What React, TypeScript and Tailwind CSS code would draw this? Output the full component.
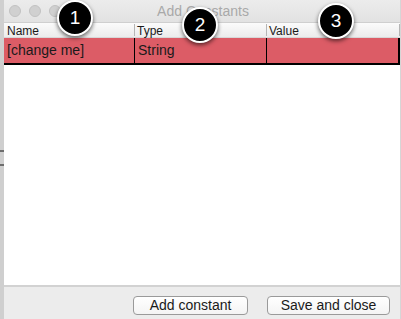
import React from "react";

const font = { fontFamily: '"Liberation Sans", Arial, sans-serif' };

function Badge({ n, className }: { n: number; className: string }) {
  return (
    <div
      className={`absolute w-[36px] h-[36px] rounded-full bg-black border-[2px] border-white shadow-[0_2px_4px_rgba(0,0,0,0.6)] flex items-center justify-center text-white text-[19px] ${className}`}
    >
      {n}
    </div>
  );
}

export default function App() {
  return (
    <div className="relative w-[401px] h-[319px] flex bg-white overflow-hidden" style={font}>
      <div className="w-[4px] h-full bg-[#cfcfcf] flex flex-col">
        <div className="h-[150px]" />
        <div className="h-[2px] bg-[#6e6e6e]" />
        <div className="h-[12px]" />
        <div className="h-[2px] bg-[#6e6e6e]" />
      </div>
      <div className="flex-1 flex flex-col border-r border-[#d6d6d6]">
        <div className="h-[22px] bg-gradient-to-b from-[#ececec] to-[#e2e2e2] relative flex items-center justify-center">
          <div className="absolute left-[5px] top-[5px] flex gap-[8px]">
            <div className="w-[12px] h-[12px] rounded-full bg-[#d0d0d0] border border-[#c2c2c2]" />
            <div className="w-[12px] h-[12px] rounded-full bg-[#d0d0d0] border border-[#c2c2c2]" />
            <div className="w-[12px] h-[12px] rounded-full bg-[#d0d0d0] border border-[#c2c2c2]" />
          </div>
          <span className="text-[14px] text-[#a9a9a9] ml-[2px]">Add Constants</span>
        </div>
        <div className="h-[16px] flex bg-gradient-to-b from-[#fbfbfb] to-[#ececec] border-t border-[#cfcfcf] border-b border-b-[#d8d8d8] text-[12px] text-[#1a1a1a] leading-[14px]">
          <div className="w-[131px] pl-[3px] border-r border-[#b5b5b5] my-[1px]">Name</div>
          <div className="w-[132px] pl-[2px] border-r border-[#b5b5b5] my-[1px]">Type</div>
          <div className="flex-1 pl-[2px] border-r border-[#b5b5b5] my-[1px]">Value</div>
        </div>
        <div className="h-[27px] flex bg-[#dc5c66] border-b-2 border-black border-r-2 text-[14px] text-[#1a1a1a]">
          <div className="w-[131px] pl-[3px] border-r border-black flex items-center">[change me]</div>
          <div className="w-[132px] pl-[3px] border-r border-black flex items-center">String</div>
          <div className="flex-1" />
        </div>
        <div className="flex-1 bg-white" />
        <div className="h-[34px] bg-[#ececec] border-t-2 border-[#d2d2d2] flex items-center justify-end gap-[19px] pr-[10px] pt-[4px]">
          <button className="w-[115px] h-[19px] rounded-[4px] border border-[#9a9a9a] bg-gradient-to-b from-white to-[#f4f4f4] text-[14px] text-[#1a1a1a] leading-none">
            Add constant
          </button>
          <button className="w-[123px] h-[19px] rounded-[4px] border border-[#9a9a9a] bg-gradient-to-b from-white to-[#f4f4f4] text-[14px] text-[#1a1a1a] leading-none">
            Save and close
          </button>
        </div>
      </div>
      <Badge n={1} className="left-[57px] top-[0px]" />
      <Badge n={2} className="left-[182px] top-[7px]" />
      <Badge n={3} className="left-[318px] top-[3px]" />
    </div>
  );
}
